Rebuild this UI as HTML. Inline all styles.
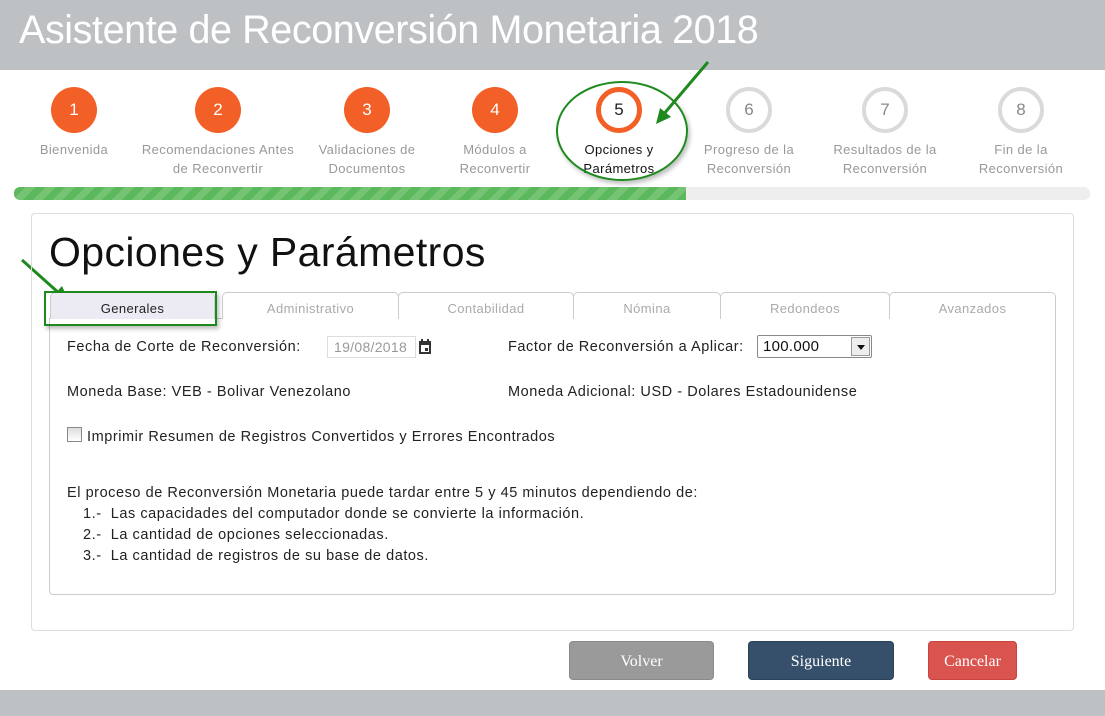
<!DOCTYPE html>
<html><head><meta charset="utf-8"><style>
*{margin:0;padding:0;box-sizing:border-box}
body{width:1105px;height:716px;position:relative;background:#fff;font-family:"Liberation Sans",Arial,sans-serif;overflow:hidden}
.a{position:absolute}
.hdr{left:0;top:0;width:1105px;height:70px;background:#bdc1c4}
.hdr span{position:absolute;left:19px;top:8px;color:#fff;font-size:39.5px;letter-spacing:-0.4px}
.c{width:46px;height:46px;border-radius:50%;top:87px;text-align:center;line-height:46px;font-size:17px}
.o{background:#f26027;color:#fff}
.g{background:#fff;border:4px solid #d8dadc;color:#888;line-height:38px}
.lb{top:140px;width:170px;text-align:center;font-size:13px;line-height:19px;color:#999;letter-spacing:0.4px}
.t{top:292px;height:27px;border:1px solid #ccc;border-bottom:none;border-radius:5px 5px 0 0;text-align:center;font-size:13px;line-height:31px;color:#aaa;letter-spacing:0.4px;background:#fff}
.tx{font-size:14.5px;color:#222;letter-spacing:0.55px}
.b{top:641px;height:39px;border-radius:4px;color:#fff;font-family:"Liberation Serif",serif;font-size:16px;text-align:center;line-height:39px}
</style></head><body>
<div class="a hdr"><span>Asistente de Reconversión Monetaria 2018</span></div>

<div class="a c o" style="left:51px">1</div>
<div class="a c o" style="left:195px">2</div>
<div class="a c o" style="left:344px">3</div>
<div class="a c o" style="left:472px">4</div>
<div class="a c" style="left:596px;background:#fff;border:5px solid #f26027;line-height:36px;color:#222">5</div>
<div class="a c g" style="left:726px">6</div>
<div class="a c g" style="left:862px">7</div>
<div class="a c g" style="left:998px">8</div>

<div class="a lb" style="left:-11px">Bienvenida</div>
<div class="a lb" style="left:133px">Recomendaciones Antes<br>de Reconvertir</div>
<div class="a lb" style="left:282px">Validaciones de<br>Documentos</div>
<div class="a lb" style="left:410px">Módulos a<br>Reconvertir</div>
<div class="a lb" style="left:534px;color:#111">Opciones y<br>Parámetros</div>
<div class="a lb" style="left:664px">Progreso de la<br>Reconversión</div>
<div class="a lb" style="left:800px">Resultados de la<br>Reconversión</div>
<div class="a lb" style="left:936px">Fin de la<br>Reconversión</div>

<div class="a" style="left:556px;top:81px;width:132px;height:100px;border:2px solid #1e8a1e;border-radius:50%;box-shadow:2px 3px 4px rgba(0,0,0,.25)"></div>
<svg class="a" style="left:0;top:0" width="1105" height="716">
<line x1="708" y1="62" x2="663" y2="115" stroke="#1e8a1e" stroke-width="3"/>
<polygon points="656,124 660,108 671,117" fill="#1e8a1e"/>
<line x1="22" y1="260" x2="60" y2="294" stroke="#1e8a1e" stroke-width="3"/>
<polygon points="69,302 52,297 62,286" fill="#1e8a1e"/>
</svg>

<div class="a" style="left:14px;top:187px;width:1076px;height:13px;background:#eee;border-radius:6px;overflow:hidden">
<div style="width:672px;height:13px;background:repeating-linear-gradient(-45deg,#5cb85c 0 7px,#74c474 7px 14px)"></div></div>

<div class="a" style="left:31px;top:213px;width:1043px;height:418px;border:1px solid #ddd;border-radius:4px"></div>
<div class="a" style="left:49px;top:229px;font-size:41px;color:#111;letter-spacing:0.4px">Opciones y Parámetros</div>

<div class="a" style="left:49px;top:318px;width:1007px;height:277px;border:1px solid #ccc;border-radius:0 0 4px 4px"></div>
<div class="a t" style="left:50px;width:165px;background:#ecebf3;color:#222">Generales</div>
<div class="a t" style="left:222px;width:177px">Administrativo</div>
<div class="a t" style="left:398px;width:176px">Contabilidad</div>
<div class="a t" style="left:573px;width:148px">Nómina</div>
<div class="a t" style="left:720px;width:170px">Redondeos</div>
<div class="a t" style="left:889px;width:167px">Avanzados</div>
<div class="a" style="left:44px;top:291px;width:173px;height:35px;border:2px solid #1e8a1e;box-shadow:2px 3px 4px rgba(0,0,0,.25)"></div>

<div class="a tx" style="left:67px;top:339px">Fecha de Corte de Reconversión:</div>
<div class="a" style="left:327px;top:336px;width:89px;height:22px;border:1px solid #ddd;font-size:14px;color:#999;line-height:20px;padding-left:6px;letter-spacing:0.3px">19/08/2018</div>
<svg class="a" style="left:418px;top:339px" width="14" height="16"><rect x="1" y="2" width="12" height="13" fill="#333"/><rect x="3" y="6" width="8" height="7" fill="#fff"/><rect x="7" y="9" width="3" height="3" fill="#333"/><rect x="3" y="0" width="2" height="3" fill="#333"/><rect x="9" y="0" width="2" height="3" fill="#333"/></svg>
<div class="a tx" style="left:508px;top:339px">Factor de Reconversión a Aplicar:</div>
<div class="a" style="left:757px;top:335px;width:115px;height:23px;border:1px solid #888;border-radius:2px;font-size:15px;line-height:21px;padding-left:5px;color:#111;letter-spacing:0.3px">100.000
<div style="position:absolute;right:1px;top:1px;width:19px;height:19px;background:#eee;border:1px solid #999"><div style="position:absolute;left:5px;top:7px;border-left:4px solid transparent;border-right:4px solid transparent;border-top:5px solid #111"></div></div></div>

<div class="a tx" style="left:67px;top:384px">Moneda Base: VEB - Bolivar Venezolano</div>
<div class="a tx" style="left:508px;top:384px">Moneda Adicional: USD - Dolares Estadounidense</div>
<div class="a" style="left:67px;top:427px;width:15px;height:15px;border:1px solid #888;background:linear-gradient(#ddd,#fff)"></div>
<div class="a tx" style="left:87px;top:429px">Imprimir Resumen de Registros Convertidos y Errores Encontrados</div>
<div class="a tx" style="left:67px;top:483px;line-height:21px">El proceso de Reconversión Monetaria puede tardar entre 5 y 45 minutos dependiendo de:<br>
<span style="padding-left:16px">1.-&nbsp; Las capacidades del computador donde se convierte la información.</span><br>
<span style="padding-left:16px">2.-&nbsp; La cantidad de opciones seleccionadas.</span><br>
<span style="padding-left:16px">3.-&nbsp; La cantidad de registros de su base de datos.</span></div>

<div class="a b" style="left:569px;width:145px;background:#9a9a9a;border:1px solid #8a8a8a">Volver</div>
<div class="a b" style="left:748px;width:146px;background:#36506b;border:1px solid #2c4259">Siguiente</div>
<div class="a b" style="left:928px;width:89px;background:#d9534f;border:1px solid #c9433f">Cancelar</div>
<div class="a" style="left:0;top:690px;width:1105px;height:26px;background:#bdc1c4"></div>
</body></html>
